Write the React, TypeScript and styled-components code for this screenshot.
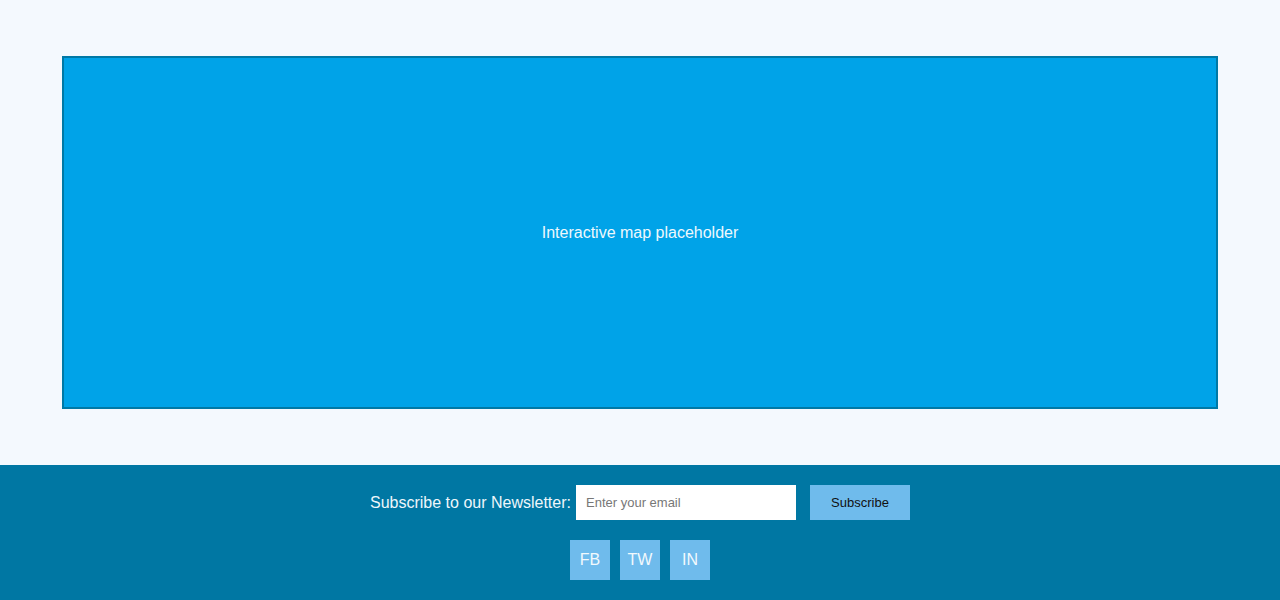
import React from "react";
import styled, { createGlobalStyle } from "styled-components";

const Global = createGlobalStyle`
  html, body { margin: 0; padding: 0; background: #f4f9fe; font-family: "Liberation Sans", Arial, sans-serif; }
  * { box-sizing: border-box; }
`;

const Main = styled.main`
  padding: 56px 62px;
`;

const Map = styled.div`
  height: 353px;
  background: #00a3e8;
  border: 2px solid #0079a6;
  display: flex;
  align-items: center;
  justify-content: center;
  color: #eef8fd;
  font-size: 16px;
`;

const Footer = styled.footer`
  background: #0077a3;
  padding: 20px 0;
  display: flex;
  flex-direction: column;
  align-items: center;
  gap: 20px;
`;

const Form = styled.form`
  display: flex;
  align-items: center;
  height: 35px;
`;

const Label = styled.label`
  color: #eef6fb;
  font-size: 16px;
  margin-right: 5px;
`;

const Input = styled.input`
  width: 220px;
  height: 35px;
  border: none;
  padding: 0 10px;
  font-size: 13px;
  font-family: "Liberation Sans", Arial, sans-serif;
  background: #fff;
  outline: none;
  &::placeholder { color: #777; }
`;

const Button = styled.button`
  width: 100px;
  height: 35px;
  margin-left: 14px;
  border: none;
  background: #6fbbec;
  color: #111;
  font-size: 13px;
  font-family: "Liberation Sans", Arial, sans-serif;
`;

const Socials = styled.div`
  display: flex;
  gap: 10px;
`;

const Social = styled.a`
  width: 40px;
  height: 40px;
  display: flex;
  align-items: center;
  justify-content: center;
  background: #6fbbec;
  color: #f2f9fd;
  font-size: 16px;
  text-decoration: none;
`;

export default function App() {
  return (
    <>
      <Global />
      <Main>
        <Map>Interactive map placeholder</Map>
      </Main>
      <Footer>
        <Form onSubmit={(e) => e.preventDefault()}>
          <Label htmlFor="email">Subscribe to our Newsletter:</Label>
          <Input id="email" type="email" placeholder="Enter your email" />
          <Button type="submit">Subscribe</Button>
        </Form>
        <Socials>
          <Social href="#">FB</Social>
          <Social href="#">TW</Social>
          <Social href="#">IN</Social>
        </Socials>
      </Footer>
    </>
  );
}
